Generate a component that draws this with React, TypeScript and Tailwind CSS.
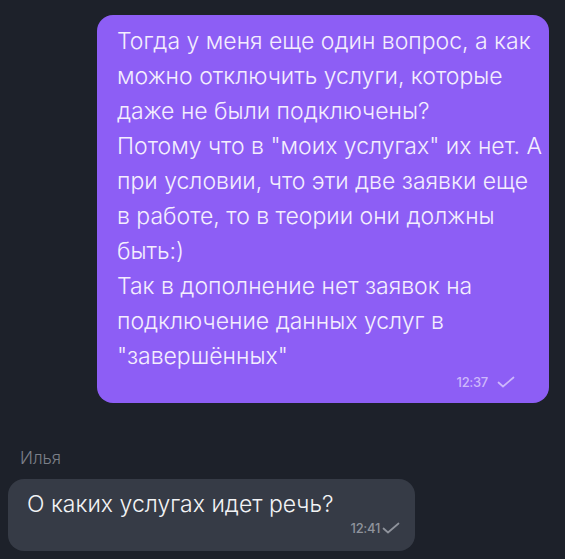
import React from 'react';

const outgoing = [
    'Тогда у меня еще один вопрос, а как',
    'можно отключить услуги, которые',
    'даже не были подключены?',
    'Потому что в "моих услугах" их нет. А',
    'при условии, что эти две заявки еще',
    'в работе, то в теории они должны',
    'быть:)',
    'Так в дополнение нет заявок на',
    'подключение данных услуг в',
    '"завершённых"',
];

const Check: React.FC<{ className?: string }> = ({ className }) => (
    <svg viewBox="0 0 18 12" className={className} fill="none" stroke="currentColor" strokeWidth={1.7} strokeLinecap="round" strokeLinejoin="round">
        <path d="M1.5 6.5 L6 10.5 L16.5 1.5" />
    </svg>
);

export default function App() {
    return (
        <div className="w-[565px] h-[559px] overflow-hidden bg-[#1d212a] font-['Inter',sans-serif] flex flex-col">
            {/* Outgoing message */}
            <div className="ml-[97px] mt-[15px] w-[452px] rounded-[16px] bg-[#8d5ef5] pl-[20px] pr-[16px] pt-[9px] pb-[14px]">
                <div className="text-[23px] leading-[35px] text-[#f4eefe] font-light tracking-[0px]">
                    {outgoing.map((line, i) => (
                        <div key={i} className="whitespace-nowrap">{line}</div>
                    ))}
                </div>
                <div className="flex items-center justify-end gap-[9px] pr-[18px] mt-[1px] text-[#cdb8fb]">
                    <span className="text-[13px] leading-[14px] font-medium tracking-[-0.3px]">12:37</span>
                    <Check className="w-[18px] h-[12px]" />
                </div>
            </div>

            {/* Incoming message */}
            <div className="ml-[20px] mt-[45px] text-[17px] leading-[20px] text-[#7b7f88] font-light">Илья</div>
            <div className="ml-[8px] mt-[11px] w-[407px] h-[72px] rounded-[16px] bg-[#363b46] pl-[19px] pr-[15px] pt-[10px]">
                <div className="text-[23px] leading-[30px] text-[#f2f3f5] font-light whitespace-nowrap">О каких услугах идет речь?</div>
                <div className="flex items-center justify-end gap-[2px] mt-[2px] text-[#8f939c]">
                    <span className="text-[13px] leading-[14px] font-medium tracking-[-0.3px]">12:41</span>
                    <Check className="w-[18px] h-[12px]" />
                </div>
            </div>
        </div>
    );
}
